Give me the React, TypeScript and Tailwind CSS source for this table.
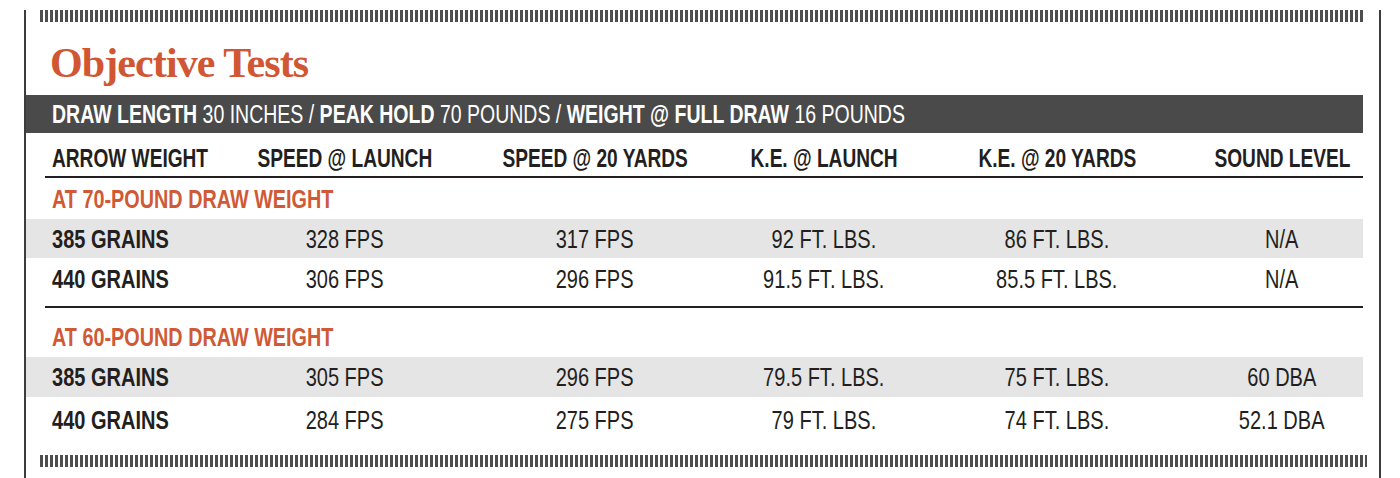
import React from "react";

const GRID = "grid grid-cols-[194px_250px_250px_208px_258px_177px]";
const SANS = "font-['Liberation_Sans',Arial,sans-serif]";

function Cell({ children, first, bold, last, head }: { children: React.ReactNode; first?: boolean; bold?: boolean; last?: boolean; head?: boolean }) {
  const scale = head ? "scale-x-[0.735]" : "scale-x-[0.77]";
  if (first) {
    return (
      <div className="pl-[26px] flex items-center">
        <span className={`inline-block origin-left ${scale} whitespace-nowrap ${bold ? "font-bold" : ""}`}>{children}</span>
      </div>
    );
  }
  return (
    <div className={`flex items-center justify-center ${last ? "pl-[15px]" : ""}`}>
      <span className={`inline-block ${scale} whitespace-nowrap ${bold ? "font-bold" : ""}`}>{children}</span>
    </div>
  );
}

function DataRow({ cells, gray, className }: { cells: string[]; gray?: boolean; className: string }) {
  return (
    <div className={`${GRID} ${gray ? "bg-[#e5e5e5]" : ""} ${className}`}>
      <Cell first bold>{cells[0]}</Cell>
      <Cell>{cells[1]}</Cell>
      <Cell>{cells[2]}</Cell>
      <Cell>{cells[3]}</Cell>
      <Cell>{cells[4]}</Cell>
      <Cell last>{cells[5]}</Cell>
    </div>
  );
}

function Dashes({ className }: { className: string }) {
  return (
    <div
      className={`bg-[repeating-linear-gradient(90deg,#4e4e4e_0px,#4e4e4e_3px,transparent_3px,transparent_5px)] ${className}`}
    />
  );
}

export default function App() {
  return (
    <div className={`w-[1400px] h-[478px] bg-white overflow-hidden ${SANS} text-[#231f20] text-[26px] leading-none`}>
      <div className="ml-[24px] w-[1357px] h-[478px] border-x-2 border-[#3c3c3c]">
        <div className="w-[1337px]">
          <Dashes className="mt-[10px] ml-[14px] h-[12px] w-[1323px]" />
          <h1 className="mt-[19px] pl-[24px] h-[44px] leading-[44px] text-[42px] tracking-[-0.9px] font-bold text-[#d05634] font-['Liberation_Serif','Times_New_Roman',serif]">
            Objective Tests
          </h1>
          <div className="mt-[10px] h-[38px] bg-[#4a4a4a] text-white flex items-center pl-[26px]">
            <span className="inline-block origin-left scale-x-[0.75] whitespace-nowrap">
              <b>DRAW LENGTH</b> 30 INCHES / <b>PEAK HOLD</b> 70 POUNDS / <b>WEIGHT @ FULL DRAW</b> 16 POUNDS
            </span>
          </div>
          <div className={`${GRID} h-[43px] pt-[6px]`}>
            <Cell first bold head>ARROW WEIGHT</Cell>
            <Cell bold head>SPEED @ LAUNCH</Cell>
            <Cell bold head>SPEED @ 20 YARDS</Cell>
            <Cell bold head>K.E. @ LAUNCH</Cell>
            <Cell bold head>K.E. @ 20 YARDS</Cell>
            <Cell bold head last>SOUND LEVEL</Cell>
          </div>
          <div className="ml-[19px] h-[2px] bg-[#231f20]" />
          <div className="h-[41px] flex items-center pl-[26px] text-[#cf5a35] font-bold">
            <span className="inline-block origin-left scale-x-[0.762] whitespace-nowrap">AT 70-POUND DRAW WEIGHT</span>
          </div>
          <DataRow gray className="h-[39px]" cells={["385 GRAINS", "328 FPS", "317 FPS", "92 FT. LBS.", "86 FT. LBS.", "N/A"]} />
          <DataRow className="h-[41px]" cells={["440 GRAINS", "306 FPS", "296 FPS", "91.5 FT. LBS.", "85.5 FT. LBS.", "N/A"]} />
          <div className="mt-[7px] ml-[19px] h-[2px] bg-[#231f20]" />
          <div className="h-[49px] pt-[9px] flex items-center pl-[26px] text-[#cf5a35] font-bold">
            <span className="inline-block origin-left scale-x-[0.762] whitespace-nowrap">AT 60-POUND DRAW WEIGHT</span>
          </div>
          <DataRow gray className="h-[40px]" cells={["385 GRAINS", "305 FPS", "296 FPS", "79.5 FT. LBS.", "75 FT. LBS.", "60 DBA"]} />
          <DataRow className="h-[43px] pt-[2px]" cells={["440 GRAINS", "284 FPS", "275 FPS", "79 FT. LBS.", "74 FT. LBS.", "52.1 DBA"]} />
          <Dashes className="mt-[15px] ml-[14px] h-[12px] w-[1327px]" />
        </div>
      </div>
    </div>
  );
}
